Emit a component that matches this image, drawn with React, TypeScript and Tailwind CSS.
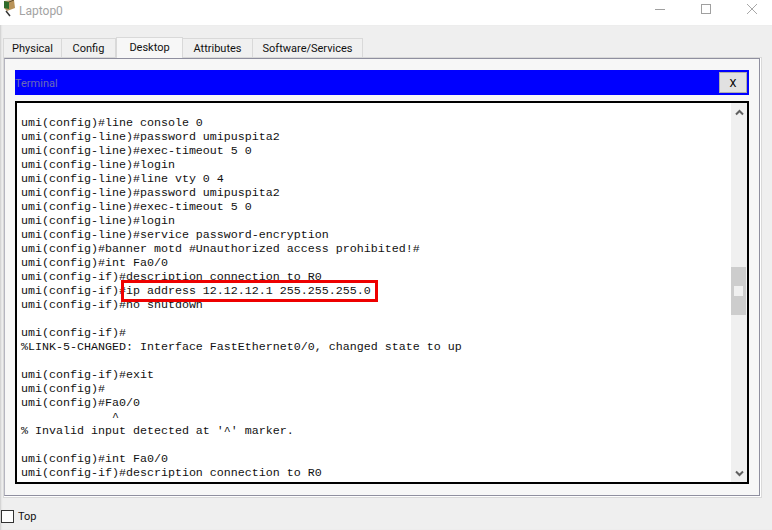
const lines = [
  "umi(config)#line console 0",
  "umi(config-line)#password umipuspita2",
  "umi(config-line)#exec-timeout 5 0",
  "umi(config-line)#login",
  "umi(config-line)#line vty 0 4",
  "umi(config-line)#password umipuspita2",
  "umi(config-line)#exec-timeout 5 0",
  "umi(config-line)#login",
  "umi(config-line)#service password-encryption",
  "umi(config)#banner motd #Unauthorized access prohibited!#",
  "umi(config)#int Fa0/0",
  "umi(config-if)#description connection to R0",
  "umi(config-if)#ip address 12.12.12.1 255.255.255.0",
  "umi(config-if)#no shutdown",
  "",
  "umi(config-if)#",
  "%LINK-5-CHANGED: Interface FastEthernet0/0, changed state to up",
  "",
  "umi(config-if)#exit",
  "umi(config)#",
  "umi(config)#Fa0/0",
  "             ^",
  "% Invalid input detected at '^' marker.",
  "",
  "umi(config)#int Fa0/0",
  "umi(config-if)#description connection to R0",
];

const tabs = [
  { label: "Physical", w: "w-[59px]" },
  { label: "Config", w: "w-[54px]" },
  { label: "Desktop", w: "w-[67px]", active: true },
  { label: "Attributes", w: "w-[70px]" },
  { label: "Software/Services", w: "w-[110px]" },
];

export default function App() {
  return (
    <div className="w-[772px] h-[530px] bg-[#efefef] flex flex-col overflow-hidden font-['Roboto','Liberation_Sans',sans-serif] text-[11px] text-[#111]">
      <div className="h-[25px] bg-white flex items-center shrink-0">
        <svg width="17" height="17" viewBox="0 0 17 17" className="ml-[1px] mb-[8px]">
          <path d="M3 1 L13 0 L14 8 L6 11 L3 8 Z" fill="#b8935a" />
          <path d="M3 1 L8 2 L8 9 L3 8 Z" fill="#2f6b2a" />
          <path d="M8 2 L13 0" stroke="#5c4a2a" fill="none" />
          <path d="M5 11 L9 16" stroke="#333" strokeWidth="1.5" fill="none" />
        </svg>
        <span className="ml-[1px] mb-[3px] text-[12px] text-[#a3a3a3]">Laptop0</span>
        <div className="ml-auto flex items-center mb-[8px]">
          <svg width="12" height="12" viewBox="0 0 12 12" className="mr-[34px]">
            <path d="M1 6.5 H11" stroke="#a0a0a0" />
          </svg>
          <svg width="12" height="12" viewBox="0 0 12 12" className="mr-[34px]">
            <rect x="1.5" y="1.5" width="9" height="9" fill="none" stroke="#a0a0a0" />
          </svg>
          <svg width="12" height="12" viewBox="0 0 12 12" className="mr-[14px]">
            <path d="M1 1 L11 11 M11 1 L1 11" stroke="#a8a8a8" />
          </svg>
        </div>
      </div>

      <div className="flex-1 flex flex-col shadow-[inset_2px_0_2px_-1px_#cccccc]">
        <div className="flex items-end h-[32px] pl-[3px] shrink-0">
          {tabs.map((t) => (
            <div
              key={t.label}
              className={
                t.active
                  ? `${t.w} h-[21px] -mb-[1px] relative z-10 bg-[#f7f7f7] border border-[#d9d9d9] border-b-0 flex items-center justify-center`
                  : `${t.w} h-[19px] pt-[2px] bg-[#f0f0f0] border border-[#d9d9d9] border-l-0 first:border-l border-b-0 flex items-center justify-center`
              }
            >
              {t.label}
            </div>
          ))}
        </div>

        <div className="ml-[3px] w-[759px] h-[441px] shrink-0 bg-white border border-[#d9d9d9] pr-[1px] pb-[1px] flex">
          <div className="flex-1 bg-[#f7f7f7] border border-[#8f8f9f] border-l-[#b5b5c0] pl-[10px] pr-[10px] pt-[11px] flex flex-col">
            <div className="h-[25px] bg-[#0000ff] flex items-center justify-between pr-[2px] shrink-0">
              <span className="pt-[3px] text-[#6b6bb8]">Terminal</span>
              <button className="w-[28px] h-[21px] pt-[3px] bg-[#e1e1e1] border border-[#adadad] flex items-center justify-center text-black">
                X
              </button>
            </div>
            <div className="relative mt-[6px] h-[383px] bg-white border-2 border-black flex shrink-0">
              <pre className="flex-1 overflow-hidden pl-[4px] pt-[13px] font-['Liberation_Mono',monospace] text-[11.67px] leading-[14px] text-[#111]">
                {lines.join("\n")}
              </pre>
              <div className="w-[16px] bg-[#f0f0f0] flex flex-col items-center justify-between shrink-0 relative">
                <svg width="9" height="7" viewBox="0 0 9 7" className="mt-[6px]">
                  <path d="M1 5.5 L4.5 2 L8 5.5" stroke="#606060" strokeWidth="2" fill="none" />
                </svg>
                <div className="absolute top-[164px] left-0 w-[15px] h-[48px] bg-[#cdcdcd] flex items-center justify-center">
                  <div className="w-[9px] h-[10px] bg-[#f0f0f0]" />
                </div>
                <svg width="9" height="7" viewBox="0 0 9 7" className="mb-[5px]">
                  <path d="M1 1.5 L4.5 5 L8 1.5" stroke="#606060" strokeWidth="2" fill="none" />
                </svg>
              </div>
              <div className="absolute left-[104px] top-[177px] w-[257px] h-[22px] border-[3px] border-[#ee0000]" />
            </div>
          </div>
        </div>

        <div className="flex items-center pl-[1px] pt-[11px] leading-[13px]">
          <div className="w-[13px] h-[13px] bg-white border border-[#333]" />
          <span className="ml-[4px] pt-[1px]">Top</span>
        </div>
      </div>
    </div>
  );
}
